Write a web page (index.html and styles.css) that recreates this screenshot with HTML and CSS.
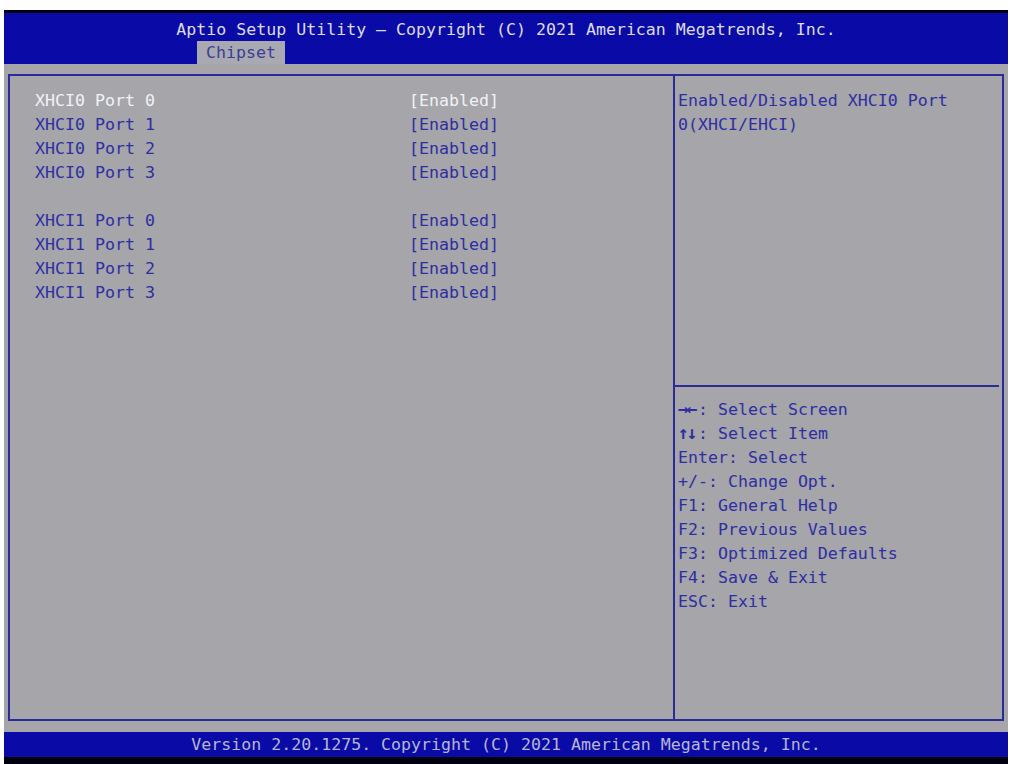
FILE: index.html
```html
<!DOCTYPE html>
<html lang="en">
<head>
  <meta charset="UTF-8" />
  <title>Aptio Setup Utility - Chipset</title>
  <link rel="stylesheet" href="styles.css">
</head>
<body>

  <div class="screen">
    <div class="topBar">
      <div class="topTitle">Aptio Setup Utility – Copyright (C) 2021 American Megatrends, Inc.</div>
      <div class="tabs">
        <span class="tab">Chipset</span>
      </div>
    </div>

    <div class="main">
      <div class="frame">
        <div class="settings">
          <div class="row selected"><span class="label">XHCI0 Port 0</span><span class="value">[Enabled]</span></div>
          <div class="row"><span class="label">XHCI0 Port 1</span><span class="value">[Enabled]</span></div>
          <div class="row"><span class="label">XHCI0 Port 2</span><span class="value">[Enabled]</span></div>
          <div class="row"><span class="label">XHCI0 Port 3</span><span class="value">[Enabled]</span></div>
          <div class="row spacer"></div>
          <div class="row"><span class="label">XHCI1 Port 0</span><span class="value">[Enabled]</span></div>
          <div class="row"><span class="label">XHCI1 Port 1</span><span class="value">[Enabled]</span></div>
          <div class="row"><span class="label">XHCI1 Port 2</span><span class="value">[Enabled]</span></div>
          <div class="row"><span class="label">XHCI1 Port 3</span><span class="value">[Enabled]</span></div>
        </div>

        <div class="side">
          <div class="helpText">
            <div>Enabled/Disabled XHCI0 Port</div>
            <div>0(XHCI/EHCI)</div>
          </div>
          <div class="keys">
            <div><span class="arrows">→←</span>: Select Screen</div>
            <div><span class="arrows">↑↓</span>: Select Item</div>
            <div>Enter: Select</div>
            <div>+/-: Change Opt.</div>
            <div>F1: General Help</div>
            <div>F2: Previous Values</div>
            <div>F3: Optimized Defaults</div>
            <div>F4: Save &amp; Exit</div>
            <div>ESC: Exit</div>
          </div>
        </div>
      </div>
    </div>

    <div class="bottomBar">Version 2.20.1275. Copyright (C) 2021 American Megatrends, Inc.</div>
  </div>

</body>
</html>
```

FILE: styles.css
```css
body {
  margin: 0;
  background-color: #ffffff;
  font-family: 'DejaVu Sans Mono', 'Liberation Mono', monospace;
  font-size: 16.6px;
}
.screen {
  margin: 10px 4px 0 4px;
  width: 1004px;
}
.topBar {
  background-color: #0a0aa6;
  border-top: 3px solid #000010;
  height: 51px;
  display: flex;
  flex-direction: column;
  align-items: center;
}
.topTitle {
  color: #dcdcec;
  height: 26px;
  line-height: 26px;
  margin-top: 4px;
}
.tabs {
  width: 100%;
  margin-top: -2px;
  padding-left: 193px;
  box-sizing: border-box;
}
.tab {
  display: inline-block;
  background-color: #a9a9b2;
  color: #3c3c96;
  padding: 0 9px;
  height: 23px;
  line-height: 23px;
}
.main {
  background-color: #a5a5aa;
  padding: 10px 4px 11px 4px;
}
.frame {
  border: 2px solid #2a2a98;
  height: 643px;
  display: flex;
}
.settings {
  width: 663px;
  padding: 13px 0 0 25px;
  box-sizing: border-box;
}
.row {
  display: flex;
  height: 24px;
  line-height: 24px;
  color: #2e2ea2;
}
.row.selected {
  color: #f2f2f6;
}
.label {
  width: 374px;
}
.side {
  flex: 1;
  border-left: 2px solid #2a2a98;
  display: flex;
  flex-direction: column;
  color: #2e2ea2;
  line-height: 24px;
}
.helpText {
  height: 309px;
  padding: 13px 0 0 3px;
  box-sizing: border-box;
}
.keys {
  border-top: 2px solid #2a2a98;
  margin-right: 3px;
  padding: 11px 0 0 3px;
}
.arrows {
  display: inline-block;
  width: 20px;
  font-size: 18px;
  font-weight: bold;
  letter-spacing: -2px;
  line-height: 1;
}
.bottomBar {
  background-color: #0a0aa6;
  border-bottom: 7px solid #00000e;
  color: #b6b6d6;
  height: 25px;
  line-height: 25px;
  text-align: center;
}
```
